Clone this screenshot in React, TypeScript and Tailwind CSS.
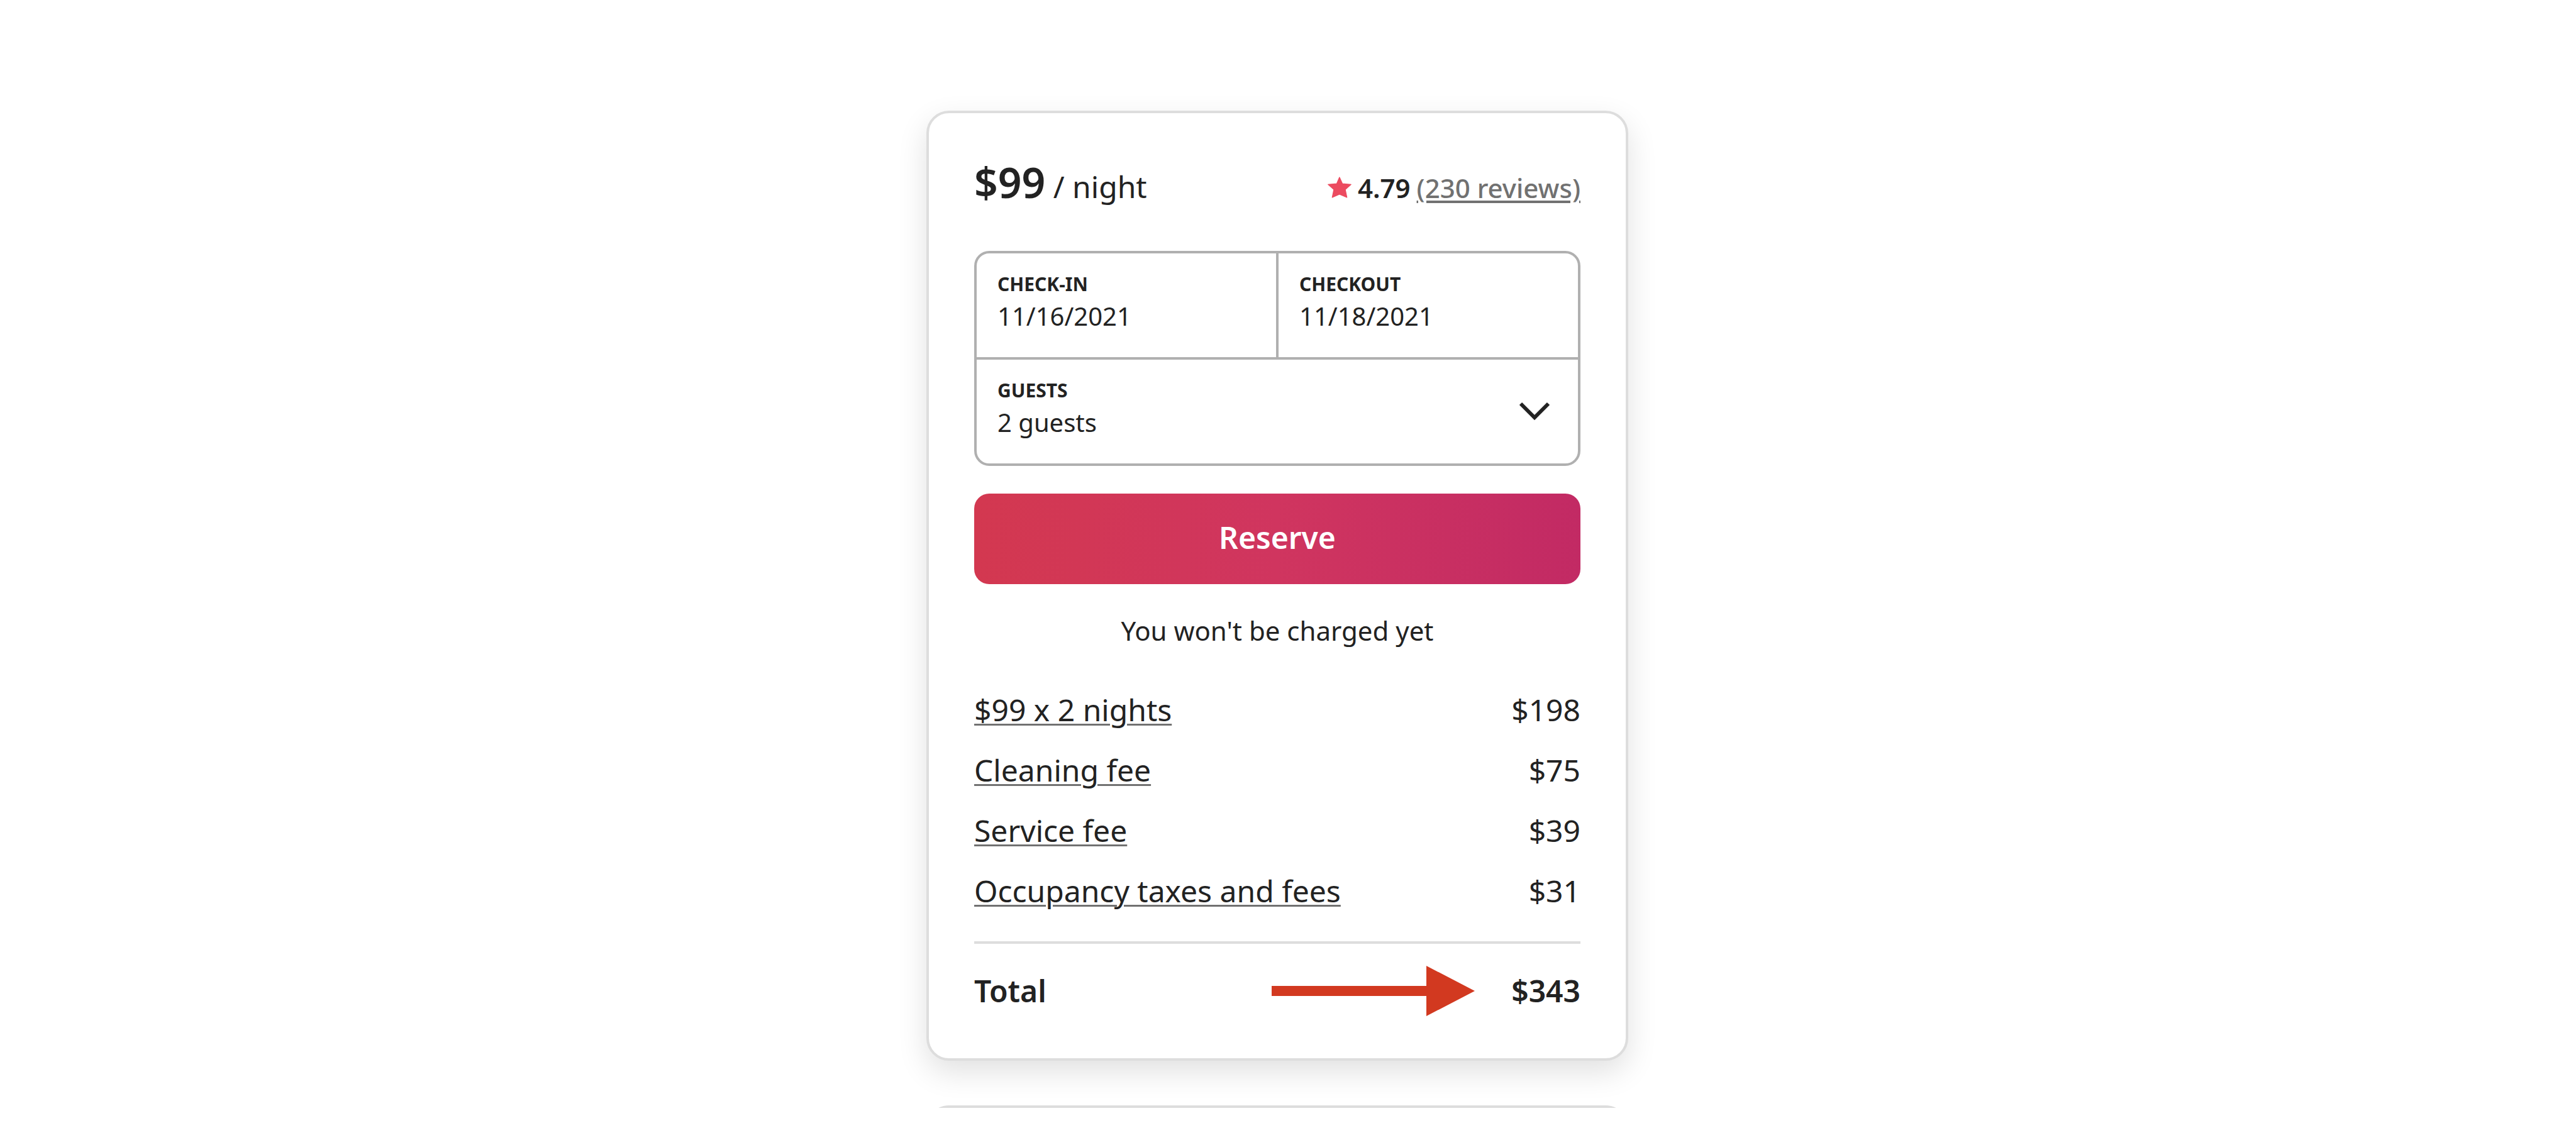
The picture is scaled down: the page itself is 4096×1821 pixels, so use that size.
import React from "react";

const fees = [
  { label: "$99 x 2 nights", amount: "$198" },
  { label: "Cleaning fee", amount: "$75" },
  { label: "Service fee", amount: "$39" },
  { label: "Occupancy taxes and fees", amount: "$31" },
];

function Star() {
  return (
    <svg
      viewBox="0 0 145 130"
      className="h-[34px] w-[38px] fill-[#ec4b60] stroke-[#ec4b60] stroke-[5]"
      strokeLinejoin="round"
      aria-hidden="true"
    >
      <path d="M72 4L90 43L142 47L107 78L117 126L72 107L28 126L38 78L3 47L55 43Z" />
    </svg>
  );
}

function Chevron() {
  return (
    <svg viewBox="0 0 50 50" className="size-[50px] fill-none stroke-[#222222] stroke-[6]" aria-hidden="true">
      <path d="M3 12L25 34L47 12" />
    </svg>
  );
}

function Arrow() {
  return (
    <svg viewBox="0 0 323 80" className="h-20 w-[323px] fill-[#d23920]" aria-hidden="true">
      <path d="M0 32h246V0l77 40-77 40V48H0z" />
    </svg>
  );
}

function DateField({ id, label, value }: { id: string; label: string; value: string }) {
  return (
    <div className="flex h-[165px] min-w-0 flex-1 flex-col pt-7 pl-[33px]">
      <label htmlFor={id} className="text-[30px] leading-[42px] font-bold">
        {label}
      </label>
      <input
        id={id}
        defaultValue={value}
        className="w-full bg-transparent text-[40px] leading-[60px] outline-none"
      />
    </div>
  );
}

export default function App() {
  return (
    <main className="flex min-h-screen flex-col items-center overflow-hidden bg-white pt-44 pr-[34px] font-['Noto_Sans',sans-serif] text-[#222222]">
      <section className="w-full max-w-[1116px] rounded-[36px] border-4 border-[#dddddd] bg-white px-[72px] pt-[69px] pb-[67px] shadow-[0_18px_48px_rgba(0,0,0,0.12)]">
        <header className="flex items-baseline justify-between">
          <p className="text-[48px] leading-20">
            <span className="text-[66px] font-semibold">$99</span> / night
          </p>
          <div className="flex items-baseline gap-2.5 text-[42px] font-semibold">
            <Star />
            <span>4.79</span>
            <a
              href="#reviews"
              className="font-medium text-[#717171] underline decoration-4 underline-offset-4"
            >
              (230 reviews)
            </a>
          </div>
        </header>

        <form onSubmit={(e) => e.preventDefault()}>
          <div className="mt-[62px] rounded-3xl border-4 border-[#b0b0b0]">
            <div className="flex divide-x-4 divide-[#b0b0b0] border-b-4 border-[#b0b0b0]">
              <DateField id="checkin" label="CHECK-IN" value="11/16/2021" />
              <DateField id="checkout" label="CHECKOUT" value="11/18/2021" />
            </div>
            <div className="flex items-center justify-between pr-11 pl-[33px]">
              <div className="flex h-[165px] flex-1 flex-col pt-7">
                <label htmlFor="guests" className="text-[30px] leading-[42px] font-bold">
                  GUESTS
                </label>
                <select
                  id="guests"
                  defaultValue="2"
                  className="w-full appearance-none bg-transparent text-[40px] leading-[60px] outline-none"
                >
                  <option value="1">1 guest</option>
                  <option value="2">2 guests</option>
                  <option value="3">3 guests</option>
                </select>
              </div>
              <Chevron />
            </div>
          </div>
          <button
            type="submit"
            className="mt-11 h-36 w-full rounded-3xl bg-linear-to-r from-[#d33850] via-[#d0355f] to-[#c22a64] pb-1 text-[48px] font-semibold text-white"
          >
            Reserve
          </button>
        </form>

        <p className="mt-11 text-center text-[42px] leading-[60px]">You won't be charged yet</p>

        <ul className="mt-[66px] flex flex-col gap-9">
          {fees.map((fee) => (
            <li key={fee.label} className="flex items-center justify-between text-[48px] leading-[60px]">
              <button
                type="button"
                className="underline decoration-[#717171] decoration-[3px] underline-offset-4"
              >
                {fee.label}
              </button>
              <span>{fee.amount}</span>
            </li>
          ))}
        </ul>

        <div className="mt-[50px] flex items-center border-t-4 border-[#dddddd] pt-[35px] text-[48px] leading-20 font-semibold">
          <span>Total</span>
          <div className="ml-auto flex items-center gap-[58px]">
            <Arrow />
            <span>$343</span>
          </div>
        </div>
      </section>

      <div className="mt-[71px] h-1 w-full max-w-[1116px] overflow-hidden">
        <div className="h-20 rounded-[36px] border-4 border-[#dddddd]" />
      </div>
    </main>
  );
}
